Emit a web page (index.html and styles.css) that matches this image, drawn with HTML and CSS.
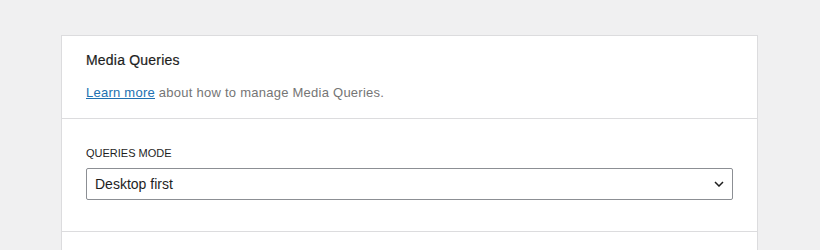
FILE: index.html
```html
<!DOCTYPE html>
<html>
  <head>
    <meta charset="utf-8" />
    <link rel="stylesheet" href="styles.css">
  </head>

  <body>
    <div class="panel">
      <div class="section section-head">
        <h2 class="title">Media Queries</h2>
        <p class="desc">
          <a href="#">Learn more</a> about how to manage Media Queries.
        </p>
      </div>

      <div class="section section-mode">
        <label class="label">Queries mode</label>
        <div class="select">
          <span>Desktop first</span>
          <svg width="10" height="6" viewBox="0 0 10 6">
            <path d="M1 1l4 4 4-4" fill="none" stroke="#1e1e1e" stroke-width="1.5" />
          </svg>
        </div>
      </div>

      <div class="section section-rest"></div>
    </div>
  </body>
</html>
```

FILE: styles.css
```css
body {
  margin: 0;
  background-color: #f0f0f1;
  font-family: "Liberation Sans", Arial, sans-serif;
  color: #1e1e1e;
}

.panel {
  margin: 35px 0 0 61px;
  width: 695px;
  background-color: #fff;
  border: 1px solid #dcdcde;
  border-bottom: none;
}

.section {
  padding: 0 24px;
  border-bottom: 1px solid #dcdcde;
}

.section-head {
  padding-top: 14px;
  padding-bottom: 15px;
}

.title {
  margin: 0 0 13px;
  font-size: 14px;
  font-weight: normal;
  line-height: 20px;
  letter-spacing: 0.2px;
  color: #1e1e1e;
  -webkit-text-stroke: 0.2px #1e1e1e;
}

.desc {
  margin: 0;
  font-size: 13px;
  line-height: 20px;
  letter-spacing: 0.25px;
  color: #757575;
}

.desc a {
  color: #2271b1;
}

.section-mode {
  display: flex;
  flex-direction: column;
  padding-top: 27px;
  padding-bottom: 31px;
}

.label {
  font-size: 11px;
  line-height: 15px;
  text-transform: uppercase;
  color: #1e1e1e;
  margin-bottom: 7px;
}

.select {
  display: flex;
  justify-content: space-between;
  align-items: center;
  height: 30px;
  padding: 0 8px;
  border: 1px solid #8c8f94;
  border-radius: 2px;
  font-size: 14px;
  color: #1e1e1e;
}

.section-rest {
  height: 30px;
  border-bottom: none;
}
```
